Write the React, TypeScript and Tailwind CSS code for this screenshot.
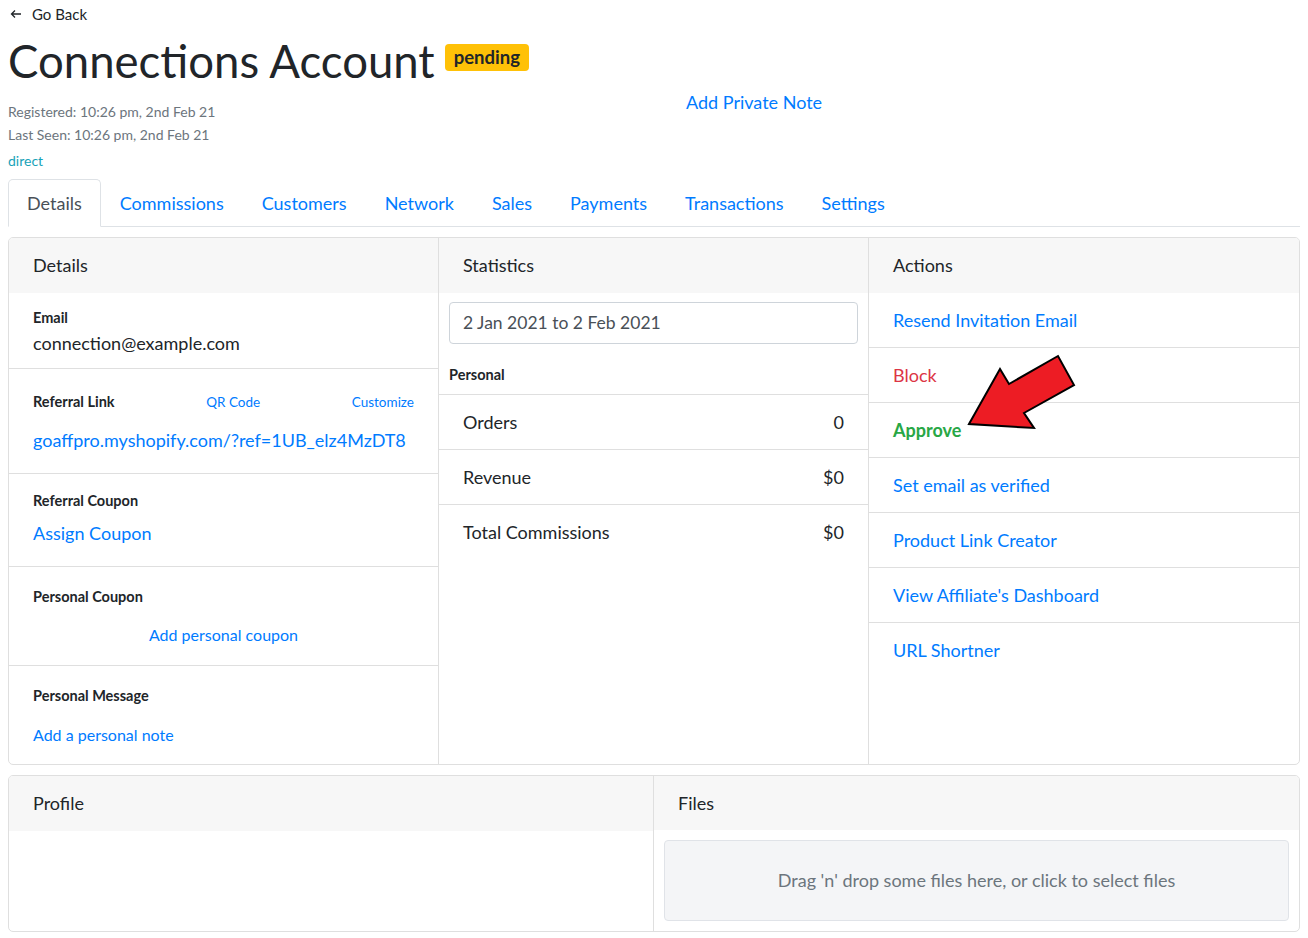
import React from 'react';

const BLUE = 'text-[#007bff]';

const DetailRow: React.FC<{ className?: string; children: React.ReactNode }> = ({ className = '', children }) => (
  <div className={`border-b border-[#dfdfdf] px-6 ${className}`}>{children}</div>
);

const Label: React.FC<{ children: React.ReactNode }> = ({ children }) => (
  <div className="text-[14.5px] font-bold leading-[18px] text-[#212529]">{children}</div>
);

const ListRow: React.FC<{ last?: boolean; children: React.ReactNode }> = ({ last, children }) => (
  <div className={`flex h-[55px] items-center px-6 text-[18px] ${last ? '' : 'border-b border-[#dfdfdf]'}`}>{children}</div>
);

const CardHeader: React.FC<{ title: string }> = ({ title }) => (
  <div className="flex h-[55px] items-center bg-[#f7f7f7] px-6 text-[18px] text-[#212529]">{title}</div>
);

const tabs = ['Details', 'Commissions', 'Customers', 'Network', 'Sales', 'Payments', 'Transactions', 'Settings'];

const actions = [
  { label: 'Resend Invitation Email', cls: BLUE },
  { label: 'Block', cls: 'text-[#dc3545]' },
  { label: 'Approve', cls: 'text-[#28a745] font-bold' },
  { label: 'Set email as verified', cls: BLUE },
  { label: 'Product Link Creator', cls: BLUE },
  { label: "View Affiliate's Dashboard", cls: BLUE },
  { label: 'URL Shortner', cls: BLUE },
];

const stats = [
  { label: 'Orders', value: '0' },
  { label: 'Revenue', value: '$0' },
  { label: 'Total Commissions', value: '$0' },
];

export default function App() {
  return (
    <div className="min-h-screen bg-white px-2 font-['Lato',sans-serif] text-[#212529]">
      {/* go back */}
      <div className="flex h-[28px] items-center gap-[10px] pl-[2px] text-[15px]">
        <svg width="12" height="10" viewBox="0 0 12 10" fill="none" stroke="#212529" strokeWidth="1.3">
          <path d="M11 5H1.5M5 1.5 1.5 5 5 8.5" />
        </svg>
        <span>Go Back</span>
      </div>

      {/* header */}
      <div className="flex pt-[5px]">
        <div className="w-[678px]">
          <div className="flex items-start">
            <h1 className="text-[45.5px] leading-[56px] font-normal">Connections Account</h1>
            <span className="ml-[10px] mt-[11px] rounded-[4px] bg-[#ffc107] px-[9px] text-[18.5px] font-bold leading-[27px] text-[#212529]">pending</span>
          </div>
          <div className="mt-[11px] text-[14px] leading-[23px] text-[#6c757d]">Registered: 10:26 pm, 2nd Feb 21</div>
          <div className="text-[14px] leading-[23px] text-[#6c757d]">Last Seen: 10:26 pm, 2nd Feb 21</div>
          <div className="mt-[3px] text-[14px] leading-[23px] text-[#17a2b8]">direct</div>
        </div>
        <div className="pt-[56px]">
          <a className={`text-[18px] leading-[26px] ${BLUE}`}>Add Private Note</a>
        </div>
      </div>

      {/* tabs */}
      <div className="mt-[7px] flex border-b border-[#dee2e6]">
        {tabs.map((t, i) => (
          <div
            key={t}
            className={`-mb-px rounded-t-[5px] border px-[18px] py-[11px] text-[18px] leading-[24px] ${
              i === 0 ? 'border-[#dee2e6] border-b-white bg-white text-[#495057]' : `border-transparent ${BLUE}`
            }`}
          >
            {t}
          </div>
        ))}
      </div>

      {/* main cards */}
      <div className="mt-[10px] grid h-[528px] grid-cols-3 overflow-hidden rounded-[5px] border border-[#dfdfdf]">
        {/* details */}
        <div className="flex flex-col border-r border-[#dfdfdf]">
          <CardHeader title="Details" />
          <DetailRow className="h-[76px] pt-[16px]">
            <Label>Email</Label>
            <div className="mt-[4px] text-[18px] leading-[24px]">connection@example.com</div>
          </DetailRow>
          <DetailRow className="h-[105px] pt-[24px]">
            <div className="flex items-center justify-between">
              <Label>Referral Link</Label>
              <a className={`text-[13.5px] leading-[18px] ${BLUE}`}>QR Code</a>
              <a className={`text-[13.5px] leading-[18px] ${BLUE}`}>Customize</a>
            </div>
            <a className={`mt-[16px] block text-[18px] leading-[26px] ${BLUE}`}>goaffpro.myshopify.com/?ref=1UB_elz4MzDT8</a>
          </DetailRow>
          <DetailRow className="h-[93px] pt-[18px]">
            <Label>Referral Coupon</Label>
            <a className={`mt-[10px] block text-[18px] leading-[26px] ${BLUE}`}>Assign Coupon</a>
          </DetailRow>
          <DetailRow className="h-[99px] pt-[21px]">
            <Label>Personal Coupon</Label>
            <div className="mt-[17px] text-center">
              <a className={`text-[16px] leading-[24px] ${BLUE}`}>Add personal coupon</a>
            </div>
          </DetailRow>
          <div className="px-6 pt-[21px]">
            <Label>Personal Message</Label>
            <a className={`mt-[18px] block text-[16px] leading-[24px] ${BLUE}`}>Add a personal note</a>
          </div>
        </div>

        {/* statistics */}
        <div className="flex flex-col border-r border-[#dfdfdf]">
          <CardHeader title="Statistics" />
          <div className="px-[10px] pt-[9px]">
            <div className="flex h-[42px] items-center rounded-[4px] border border-[#ced4da] px-[13px] text-[17.5px] text-[#495057]">
              2 Jan 2021 to 2 Feb 2021
            </div>
            <div className="mt-[22px] text-[14.5px] font-bold leading-[18px]">Personal</div>
          </div>
          <div className="mt-[10px] border-t border-[#dfdfdf]">
            {stats.map((s, i) => (
              <ListRow key={s.label} last={i === stats.length - 1}>
                <span className="flex-1">{s.label}</span>
                <span>{s.value}</span>
              </ListRow>
            ))}
          </div>
        </div>

        {/* actions */}
        <div className="relative flex flex-col">
          <CardHeader title="Actions" />
          {actions.map((a, i) => (
            <ListRow key={a.label} last={i === actions.length - 1}>
              <a className={a.cls}>{a.label}</a>
            </ListRow>
          ))}
          {/* red annotation arrow */}
          <svg className="absolute left-[95px] top-[113px]" width="115" height="85" viewBox="0 0 115 85">
            <polygon
              points="5,73 36,18 45,33 94,5 110,34 60,62 70,77"
              fill="#ed1c24"
              stroke="#000"
              strokeWidth="2"
              strokeLinejoin="miter"
            />
          </svg>
        </div>
      </div>

      {/* bottom cards */}
      <div className="mt-[10px] flex h-[157px] overflow-hidden rounded-[5px] border border-[#dfdfdf]">
        <div className="w-[645px] border-r border-[#dfdfdf]">
          <CardHeader title="Profile" />
        </div>
        <div className="flex flex-1 flex-col">
          <CardHeader title="Files" />
          <div className="m-[10px] flex h-[82px] items-center justify-center rounded-[4px] border border-[#e0e3e8] bg-[#f4f5f7] text-[18px] text-[#6c757d]">
            Drag 'n' drop some files here, or click to select files
          </div>
        </div>
      </div>
    </div>
  );
}
